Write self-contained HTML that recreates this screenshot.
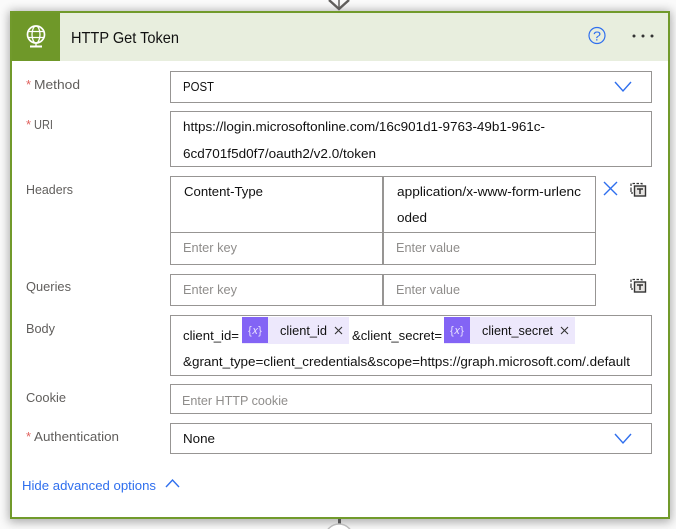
<!DOCTYPE html>
<html><head><meta charset="utf-8"><style>
html,body{margin:0;padding:0;width:676px;height:529px;overflow:hidden;background:#fafafa}
svg{display:block}
text{font-family:"Liberation Sans",sans-serif;font-size:13px;fill:#111}
.l{fill:#605e5c}
.r{fill:#e0605c}
.p{fill:#8f8d8b}
.b{fill:none;stroke:#979593;stroke-width:1;shape-rendering:crispEdges}
.c{fill:none;stroke:#2f6fee;stroke-width:1.4}
</style></head><body>
<svg width="676" height="529" viewBox="0 0 676 529" xmlns="http://www.w3.org/2000/svg">
<defs><filter id="s" x="-5%" y="-5%" width="110%" height="110%"><feGaussianBlur stdDeviation="5"/></filter></defs>
<rect x="0" y="0" width="676" height="529" fill="#fafafa"/>
<rect x="9" y="11" width="662" height="511" fill="#000" opacity=".32" filter="url(#s)"/>
<path d="M329 0L339 9L349 0" fill="none" stroke="#605e5c" stroke-width="2.4"/>
<path d="M339 0V9" stroke="#605e5c" stroke-width="1.5"/>
<rect x="338" y="518" width="3" height="6" fill="#555"/>
<circle cx="339" cy="538" r="14" fill="#fff" stroke="#bbb" stroke-width="1.5"/>
<rect x="10" y="11" width="660" height="508" fill="#719a2b"/>
<rect x="12" y="13" width="656" height="504" fill="#fff"/>
<rect x="12" y="13" width="656" height="48" fill="#e8eede"/>
<rect x="12" y="13" width="48" height="48" fill="#6f9829"/>
<g fill="none" stroke="#fff" stroke-width="1.3">
<circle cx="36" cy="34.500" r="8.500" stroke-width="1.700"/>
<ellipse cx="36" cy="34.500" rx="4" ry="8.500"/>
<path d="M28 31.500H44M28 37.500H44M36 43V46"/>
</g>
<rect x="30" y="45.500" width="12" height="2" fill="#fff"/>
<text x="71" y="43" style="font-size:16px" textLength="108" lengthAdjust="spacingAndGlyphs">HTTP Get Token</text>
<circle cx="597" cy="35.500" r="8" fill="none" stroke="#2f6fee" stroke-width="1.200"/>
<text x="593" y="40.500" style="font-size:13px;fill:#2f6fee" textLength="8" lengthAdjust="spacingAndGlyphs">?</text>
<circle cx="634" cy="36" r="1.500" fill="#333"/><circle cx="643" cy="36" r="1.500" fill="#333"/><circle cx="652" cy="36" r="1.500" fill="#333"/>

<text x="26" y="89" class="r">*</text>
<text x="34" y="89" class="l" textLength="46" lengthAdjust="spacingAndGlyphs">Method</text>
<rect x="170.500" y="71.500" width="481" height="31" class="b"/>
<text x="183" y="91" textLength="31" lengthAdjust="spacingAndGlyphs">POST</text>
<path d="M615 82L623 91L631 82" class="c"/>

<text x="26" y="129" class="r">*</text>
<text x="34" y="129" class="l" textLength="19" lengthAdjust="spacingAndGlyphs">URI</text>
<rect x="170.500" y="111.500" width="481" height="55" class="b"/>
<text x="183" y="131" textLength="362" lengthAdjust="spacingAndGlyphs">https://login.microsoftonline.com/16c901d1-9763-49b1-961c-</text>
<text x="183" y="158" textLength="193" lengthAdjust="spacingAndGlyphs">6cd701f5d0f7/oauth2/v2.0/token</text>

<text x="26" y="194" class="l" textLength="47" lengthAdjust="spacingAndGlyphs">Headers</text>
<rect x="170.500" y="176.500" width="425" height="88" class="b"/>
<path d="M382.500 176V265M383.500 176V265M170 232.500H596" class="b"/>
<text x="184" y="196" textLength="79" lengthAdjust="spacingAndGlyphs">Content-Type</text>
<text x="397" y="196" textLength="184" lengthAdjust="spacingAndGlyphs">application/x-www-form-urlenc</text>
<text x="397" y="222" textLength="30" lengthAdjust="spacingAndGlyphs">oded</text>
<text x="183" y="252" class="p" textLength="54" lengthAdjust="spacingAndGlyphs">Enter key</text>
<text x="396" y="252" class="p" textLength="64" lengthAdjust="spacingAndGlyphs">Enter value</text>
<path d="M604 182L617 195M617 182L604 195" class="c"/>
<g id="t" fill="none" stroke="#333">
<path d="M631 190V183.500H642V185" stroke-dasharray="2.500 1.500" stroke-width="1.200"/>
<path d="M631 190V193H633" stroke-dasharray="2 1" stroke-width="1.200"/>
<rect x="634.500" y="186" width="11" height="10" fill="#e6e4e2" stroke-width="1.400"/>
<path d="M637 189H643M640 189V194" stroke-width="1.500"/>
</g>

<text x="26" y="291" class="l" textLength="45" lengthAdjust="spacingAndGlyphs">Queries</text>
<rect x="170.500" y="274.500" width="425" height="31" class="b"/>
<path d="M382.500 274V306M383.500 274V306" class="b"/>
<text x="183" y="294" class="p" textLength="54" lengthAdjust="spacingAndGlyphs">Enter key</text>
<text x="396" y="294" class="p" textLength="64" lengthAdjust="spacingAndGlyphs">Enter value</text>
<use href="#t" y="96"/>

<text x="26" y="333" class="l" textLength="29" lengthAdjust="spacingAndGlyphs">Body</text>
<rect x="170.500" y="315.500" width="481" height="60" class="b"/>
<text x="183" y="340" textLength="56" lengthAdjust="spacingAndGlyphs">client_id=</text>
<rect x="242" y="317" width="107" height="27" fill="#ede8fc"/>
<rect x="242" y="317" width="26" height="26" fill="#8364f5"/>
<text x="248" y="334" style="font-size:11px;fill:#e6dffd" textLength="14" lengthAdjust="spacingAndGlyphs">{𝑥}</text>
<text x="280" y="335" textLength="47" lengthAdjust="spacingAndGlyphs">client_id</text>
<path d="M335 327L342 334M342 327L335 334" stroke="#333" stroke-width="1.100" fill="none"/>
<text x="352" y="340" textLength="90" lengthAdjust="spacingAndGlyphs">&amp;client_secret=</text>
<rect x="444" y="317" width="131" height="27" fill="#ede8fc"/>
<rect x="444" y="317" width="26" height="26" fill="#8364f5"/>
<text x="450" y="334" style="font-size:11px;fill:#e6dffd" textLength="14" lengthAdjust="spacingAndGlyphs">{𝑥}</text>
<text x="482" y="335" textLength="71" lengthAdjust="spacingAndGlyphs">client_secret</text>
<path d="M561 327L568 334M568 327L561 334" stroke="#333" stroke-width="1.100" fill="none"/>
<text x="183" y="366" textLength="447" lengthAdjust="spacingAndGlyphs">&amp;grant_type=client_credentials&amp;scope=https://graph.microsoft.com/.default</text>

<text x="26" y="402" class="l" textLength="40" lengthAdjust="spacingAndGlyphs">Cookie</text>
<rect x="170.500" y="384.500" width="481" height="29" class="b"/>
<text x="182" y="405" class="p" textLength="106" lengthAdjust="spacingAndGlyphs">Enter HTTP cookie</text>

<text x="26" y="441" class="r">*</text>
<text x="34" y="441" class="l" textLength="85" lengthAdjust="spacingAndGlyphs">Authentication</text>
<rect x="170.500" y="423.500" width="481" height="30" class="b"/>
<text x="183" y="443" textLength="32" lengthAdjust="spacingAndGlyphs">None</text>
<path d="M615 434L623 443L631 434" class="c"/>

<text x="22" y="490" style="fill:#2f6fee" textLength="134" lengthAdjust="spacingAndGlyphs">Hide advanced options</text>
<path d="M166 487L172.500 480L179 487" class="c" stroke-width="1.100"/>
</svg>
</body></html>
